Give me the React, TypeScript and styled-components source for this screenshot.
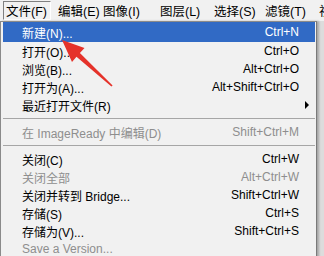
import React from 'react';
import styled, { createGlobalStyle } from 'styled-components';

const GlobalStyle = createGlobalStyle`
  html, body {
    margin: 0;
    padding: 0;
    width: 324px;
    height: 256px;
    overflow: hidden;
    background: #dcdcdc;
    font-family: "Liberation Sans", "Noto Sans CJK SC", sans-serif;
    font-size: 12px;
  }
`;

const Screen = styled.div`
  position: relative;
  width: 324px;
  height: 256px;
  overflow: hidden;
`;

const MenuBar = styled.div`
  display: flex;
  height: 21px;
  padding-left: 3px;
  background: #f1f1f1;
  box-sizing: border-box;
  overflow: hidden;
`;

const BarItem = styled.div<{ $w: number; $pressed?: boolean }>`
  flex-shrink: 0;
  width: ${p => p.$w}px;
  height: 19px;
  margin-top: 1px;
  padding-left: 2px;
  box-sizing: border-box;
  display: flex;
  align-items: center;
  font-size: 12.5px;
  color: #000;
  white-space: nowrap;
  border: 1px solid transparent;
  ${p => p.$pressed && `
    width: 48px;
    margin-right: 4px;
    border-color: #808080 #ffffff #ffffff #808080;
  `}
`;

const Body = styled.div`
  display: flex;
`;

const Dropdown = styled.div`
  width: 317px;
  height: 240px;
  box-sizing: border-box;
  background: #f1f1f1;
  border-left: 1px solid #8a8a8a;
  border-top: 1px solid #8a8a8a;
  border-right: 1px solid #7a7a7a;
  padding: 0 1px 0 2px;
  box-shadow: 2px 0 2px rgba(0, 0, 0, 0.25);
`;

const Row = styled.div<{ $active?: boolean; $disabled?: boolean; $first?: boolean }>`
  height: ${p => (p.$first ? 20 : 18)}px;
  display: flex;
  align-items: center;
  padding-left: 19px;
  padding-right: 16px;
  background: ${p => (p.$active ? '#316ac5' : 'transparent')};
  color: ${p => (p.$active ? '#ffffff' : p.$disabled ? '#8e8e8e' : '#000000')};
  position: relative;
  white-space: nowrap;
`;

const Label = styled.span`
  flex: 1;
`;

const Shortcut = styled.span`
  text-align: right;
`;

const SubArrow = styled.span`
  position: absolute;
  right: 6px;
  top: 5px;
  width: 0;
  height: 0;
  border-top: 4px solid transparent;
  border-bottom: 4px solid transparent;
  border-left: 4px solid #000;
`;

const Separator = styled.div`
  height: 9px;
  display: flex;
  align-items: center;
  &::after {
    content: '';
    flex: 1;
    height: 1px;
    background: #a6a6a6;
    margin-top: -1px;
  }
`;

const Pointer = styled.svg`
  position: absolute;
  left: 0;
  top: 0;
  pointer-events: none;
`;

const barItems = [
  { label: '文件(F)', w: 52, pressed: true },
  { label: '编辑(E)', w: 45 },
  { label: '图像(I)', w: 57 },
  { label: '图层(L)', w: 54 },
  { label: '选择(S)', w: 51 },
  { label: '滤镜(T)', w: 54 },
  { label: '视图(V)', w: 54 },
];

type Item =
  | { sep: true }
  | { label: string; key?: string; active?: boolean; disabled?: boolean; sub?: boolean };

const items: Item[] = [
  { label: '新建(N)...', key: 'Ctrl+N', active: true },
  { label: '打开(O)...', key: 'Ctrl+O' },
  { label: '浏览(B)...', key: 'Alt+Ctrl+O' },
  { label: '打开为(A)...', key: 'Alt+Shift+Ctrl+O' },
  { label: '最近打开文件(R)', sub: true },
  { sep: true },
  { label: '在 ImageReady 中编辑(D)', key: 'Shift+Ctrl+M', disabled: true },
  { sep: true },
  { label: '关闭(C)', key: 'Ctrl+W' },
  { label: '关闭全部', key: 'Alt+Ctrl+W', disabled: true },
  { label: '关闭并转到 Bridge...', key: 'Shift+Ctrl+W' },
  { label: '存储(S)', key: 'Ctrl+S' },
  { label: '存储为(V)...', key: 'Shift+Ctrl+S' },
  { label: 'Save a Version...', disabled: true },
];

export default function App() {
  return (
    <Screen>
      <GlobalStyle />
      <MenuBar>
        {barItems.map(b => (
          <BarItem key={b.label} $w={b.w} $pressed={b.pressed}>
            {b.label}
          </BarItem>
        ))}
      </MenuBar>
      <Body>
        <Dropdown>
          {items.map((it, i) =>
            'sep' in it ? (
              <Separator key={i} />
            ) : (
              <Row key={i} $active={it.active} $disabled={it.disabled} $first={i === 0}>
                <Label>{it.label}</Label>
                {it.key && <Shortcut>{it.key}</Shortcut>}
                {it.sub && <SubArrow />}
              </Row>
            )
          )}
        </Dropdown>
      </Body>
      <Pointer width="324" height="256" viewBox="0 0 324 256">
        <polygon points="62,40 84.5,48 79.9,53.1 112.6,85.4 111.4,86.6 76.5,56.7 72,62" fill="#e5322a" />
      </Pointer>
    </Screen>
  );
}
